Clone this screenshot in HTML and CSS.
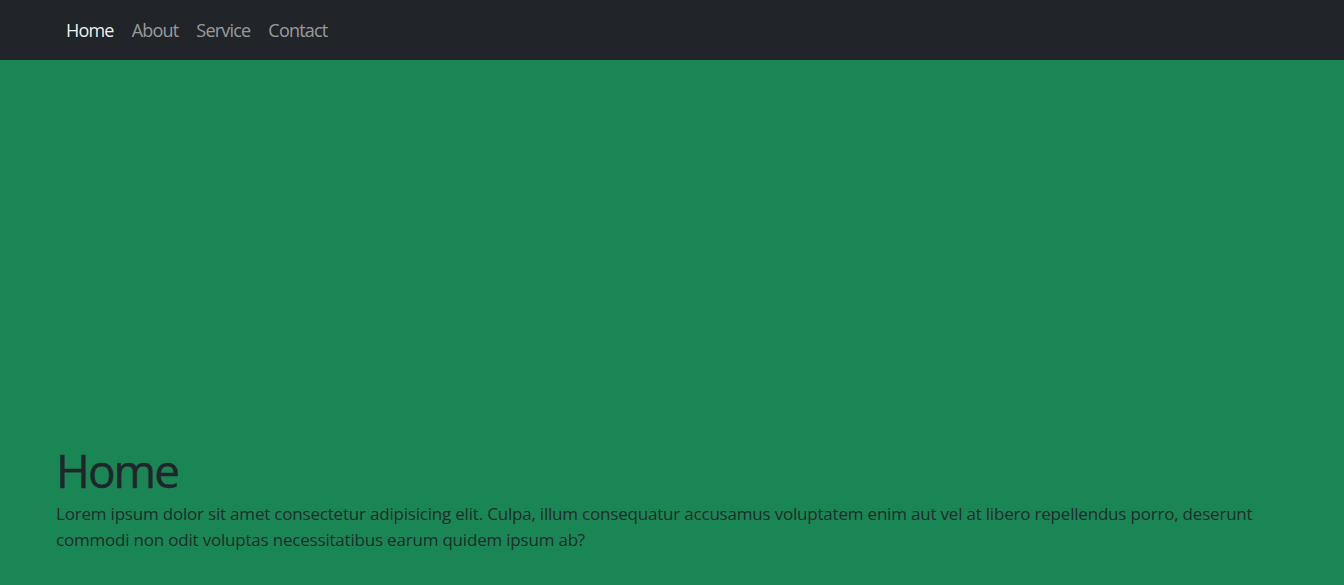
FILE: index.html
```html
<!DOCTYPE html>
<html lang="en">
<head>
<meta charset="utf-8">
<title>Home</title>
<link rel="stylesheet" href="styles.css">
</head>
<body>
<nav class="navbar">
  <ul class="nav">
    <li><a class="nav-link active" href="#">Home</a></li>
    <li><a class="nav-link" href="#">About</a></li>
    <li><a class="nav-link" href="#">Service</a></li>
    <li><a class="nav-link" href="#">Contact</a></li>
  </ul>
</nav>
<section class="hero">
  <h1 class="hero-title">Home</h1>
  <p class="hero-text">Lorem ipsum dolor sit amet consectetur adipisicing elit. Culpa, illum consequatur accusamus voluptatem enim aut vel at libero repellendus porro, deserunt commodi non odit voluptas necessitatibus earum quidem ipsum ab?</p>
</section>
</body>
</html>
```
FILE: styles.css
```css
html, body {
  margin: 0;
  padding: 0;
}
body {
  font-family: "Open Sans", "Noto Sans", sans-serif;
  color: #212529;
  background: #1b8655;
  height: 585px;
  overflow: hidden;
  display: flex;
  flex-direction: column;
}
.navbar {
  background: #212529;
  height: 60px;
  display: flex;
  align-items: center;
  padding: 0 57px;
  flex: none;
}
.nav {
  list-style: none;
  margin: 0;
  padding: 0;
  display: flex;
}
.nav-link {
  display: block;
  padding: 8px 9px;
  font-size: 18px;
  letter-spacing: -0.8px;
  color: rgba(255, 255, 255, 0.55);
  text-decoration: none;
}
.nav-link.active {
  color: rgba(255, 255, 255, 0.95);
}
.hero {
  flex: 1;
  background: #1b8655;
  display: flex;
  flex-direction: column;
  justify-content: flex-end;
  padding: 0 56px 33px 56px;
}
.hero-title {
  margin: 0 0 4px 0;
  font-size: 46px;
  font-weight: 400;
  line-height: 54px;
  letter-spacing: -2px;
  -webkit-text-stroke: 0.4px #212529;
}
.hero-text {
  margin: 0;
  font-size: 17px;
  line-height: 25.5px;
  letter-spacing: -0.2px;
  color: #1f2d2a;
}
```
